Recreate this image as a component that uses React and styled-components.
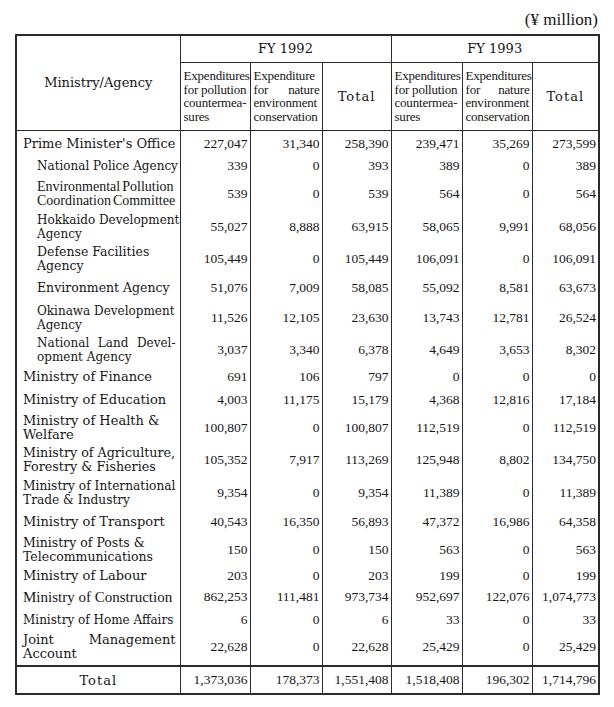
import React from "react";
import styled, { createGlobalStyle, css } from "styled-components";

const GlobalStyle = createGlobalStyle`
  html, body { margin: 0; padding: 0; background: #ffffff; }
  body { color: #161616; }
`;

const wide = css`
  font-family: "DejaVu Serif", "Liberation Serif", serif;
`;
const narrow = css`
  font-family: "Liberation Serif", "DejaVu Serif", serif;
`;

const Page = styled.div`
  width: 583px;
  padding: 11px 0 0 15px;
`;

const Unit = styled.div`
  ${narrow};
  font-size: 17px;
  line-height: 17px;
  height: 17px;
  text-align: right;
  margin-bottom: 6px;
`;

const Table = styled.table`
  border-collapse: collapse;
  table-layout: fixed;
  width: 583px;
  border: 2px solid #2b2b2b;
`;

const Row = styled.tr`
  height: ${(p) => p.$h}px;
`;

const HeadCell = styled.th`
  border: 1px solid #2b2b2b;
  padding: 0;
  font-weight: normal;
  vertical-align: middle;
  text-align: center;
  ${wide};
  font-size: 13px;
  letter-spacing: ${(p) => (p.$spaced ? "1px" : "0")};
`;

const SubHead = styled.th`
  border: 1px solid #2b2b2b;
  padding: 0 2px 0 3px;
  font-weight: normal;
  vertical-align: middle;
  text-align: left;
  ${narrow};
  font-size: 13px;
  line-height: 13.5px;
  letter-spacing: -0.2px;
`;

const Line = styled.span`
  display: block;
  white-space: nowrap;
  text-align: left;
  ${(p) =>
    p.$justify &&
    css`
      text-align: justify;
      text-align-last: justify;
    `}
`;

const LabelCell = styled.td`
  border-left: 2px solid #2b2b2b;
  border-right: 1px solid #2b2b2b;
  padding: ${(p) => p.$pt || 0}px 4px ${(p) => p.$pb || 0}px
    ${(p) => (p.$sub ? 20 : 6)}px;
  vertical-align: middle;
  ${(p) => (p.$narrow ? narrow : wide)};
  font-size: ${(p) => p.$size}px;
  line-height: 14px;
  letter-spacing: ${(p) => p.$ls || 0}px;
  word-spacing: ${(p) => p.$ws || 0}px;
`;

const NumCell = styled.td`
  border-left: 1px solid #2b2b2b;
  border-right: 1px solid #2b2b2b;
  padding: ${(p) => p.$pt || 0}px 2px ${(p) => p.$pb || 0}px 0;
  vertical-align: middle;
  text-align: right;
  ${narrow};
  font-size: 13.5px;
  line-height: 14px;
  white-space: nowrap;
`;

const TotalLabel = styled.td`
  border-top: 2px solid #2b2b2b;
  border-right: 1px solid #2b2b2b;
  text-align: center;
  vertical-align: middle;
  ${wide};
  font-size: 13px;
  letter-spacing: 1px;
`;

const TotalNum = styled(NumCell)`
  border-top: 2px solid #2b2b2b;
`;

const cols = [164, 70, 72, 69, 71, 70, 67];

const rows = [
  { h: 24, pt: 3, lines: ["Prime Minister's Office"], size: 13, v: ["227,047", "31,340", "258,390", "239,471", "35,269", "273,599"] },
  { h: 24, sub: true, lines: ["National Police Agency"], size: 12, v: ["339", "0", "393", "389", "0", "389"] },
  { h: 31, sub: true, narrow: true, ws: -1.5, lines: ["Environmental Pollution", "Coordination Committee"], size: 14, v: ["539", "0", "539", "564", "0", "564"] },
  { h: 35, sub: true, lines: ["Hokkaido Development", "Agency"], size: 12, v: ["55,027", "8,888", "63,915", "58,065", "9,991", "68,056"] },
  { h: 30, sub: true, lines: ["Defense Facilities", "Agency"], size: 12.5, v: ["105,449", "0", "105,449", "106,091", "0", "106,091"] },
  { h: 28, sub: true, lines: ["Environment Agency"], size: 12.5, v: ["51,076", "7,009", "58,085", "55,092", "8,581", "63,673"] },
  { h: 32, sub: true, lines: ["Okinawa Development", "Agency"], size: 12, v: ["11,526", "12,105", "23,630", "13,743", "12,781", "26,524"] },
  { h: 31, sub: true, lines: ["National Land Devel-", "opment Agency"], justifyFirst: true, size: 12, v: ["3,037", "3,340", "6,378", "4,649", "3,653", "8,302"] },
  { h: 23, lines: ["Ministry of Finance"], size: 13, v: ["691", "106", "797", "0", "0", "0"] },
  { h: 24, lines: ["Ministry of Education"], size: 13, v: ["4,003", "11,175", "15,179", "4,368", "12,816", "17,184"] },
  { h: 31, lines: ["Ministry of Health &", "Welfare"], size: 13, v: ["100,807", "0", "100,807", "112,519", "0", "112,519"] },
  { h: 34, lines: ["Ministry of Agriculture,", "Forestry & Fisheries"], size: 12.7, v: ["105,352", "7,917", "113,269", "125,948", "8,802", "134,750"] },
  { h: 31, lines: ["Ministry of International", "Trade & Industry"], size: 12.2, v: ["9,354", "0", "9,354", "11,389", "0", "11,389"] },
  { h: 28, lines: ["Ministry of Transport"], size: 13, v: ["40,543", "16,350", "56,893", "47,372", "16,986", "64,358"] },
  { h: 27, lines: ["Ministry of Posts &", "Telecommunications"], size: 12.5, v: ["150", "0", "150", "563", "0", "563"] },
  { h: 23, lines: ["Ministry of Labour"], size: 13, v: ["203", "0", "203", "199", "0", "199"] },
  { h: 20, narrow: true, lines: ["Ministry of Construction"], size: 15, v: ["862,253", "111,481", "973,734", "952,697", "122,076", "1,074,773"] },
  { h: 25, lines: ["Ministry of Home Affairs"], size: 12, v: ["6", "0", "6", "33", "0", "33"] },
  { h: 34, pb: 4, lines: ["Joint Management", "Account"], justifyFirst: true, size: 13, v: ["22,628", "0", "22,628", "25,429", "0", "25,429"] },
];

const totals = ["1,373,036", "178,373", "1,551,408", "1,518,408", "196,302", "1,714,796"];

const subHeads = [
  [{ t: "Expenditures" }, { t: "for pollution" }, { t: "countermea-" }, { t: "sures" }],
  [{ t: "Expenditure" }, { t: "for nature", j: true }, { t: "environment" }, { t: "conservation" }],
];
const subHeads93 = [
  [{ t: "Expenditures" }, { t: "for pollution" }, { t: "countermea-" }, { t: "sures" }],
  [{ t: "Expenditures" }, { t: "for nature", j: true }, { t: "environment" }, { t: "conservation" }],
];

function SubHeadCell({ lines }) {
  return (
    <SubHead>
      {lines.map((l, i) => (
        <Line key={i} $justify={l.j}>
          {l.t}
        </Line>
      ))}
    </SubHead>
  );
}

export default function App() {
  return (
    <>
      <GlobalStyle />
      <Page>
        <Unit>(¥ million)</Unit>
        <Table>
          <colgroup>
            {cols.map((w, i) => (
              <col key={i} style={{ width: w }} />
            ))}
          </colgroup>
          <thead>
            <Row $h={27}>
              <HeadCell rowSpan={2}>Ministry/Agency</HeadCell>
              <HeadCell colSpan={3}>FY 1992</HeadCell>
              <HeadCell colSpan={3}>FY 1993</HeadCell>
            </Row>
            <Row $h={68}>
              {subHeads.map((s, i) => (
                <SubHeadCell key={i} lines={s} />
              ))}
              <HeadCell $spaced>Total</HeadCell>
              {subHeads93.map((s, i) => (
                <SubHeadCell key={i} lines={s} />
              ))}
              <HeadCell $spaced>Total</HeadCell>
            </Row>
          </thead>
          <tbody>
            {rows.map((r, i) => (
              <Row key={i} $h={r.h}>
                <LabelCell
                  $sub={r.sub}
                  $narrow={r.narrow}
                  $size={r.size}
                  $ws={r.ws}
                  $pt={r.pt}
                  $pb={r.pb}
                >
                  {r.lines.map((l, k) => (
                    <Line key={k} $justify={r.justifyFirst && k === 0}>
                      {l}
                    </Line>
                  ))}
                </LabelCell>
                {r.v.map((n, k) => (
                  <NumCell key={k} $pt={r.pt} $pb={r.pb}>
                    {n}
                  </NumCell>
                ))}
              </Row>
            ))}
            <Row $h={28}>
              <TotalLabel>Total</TotalLabel>
              {totals.map((n, k) => (
                <TotalNum key={k}>{n}</TotalNum>
              ))}
            </Row>
          </tbody>
        </Table>
      </Page>
    </>
  );
}
